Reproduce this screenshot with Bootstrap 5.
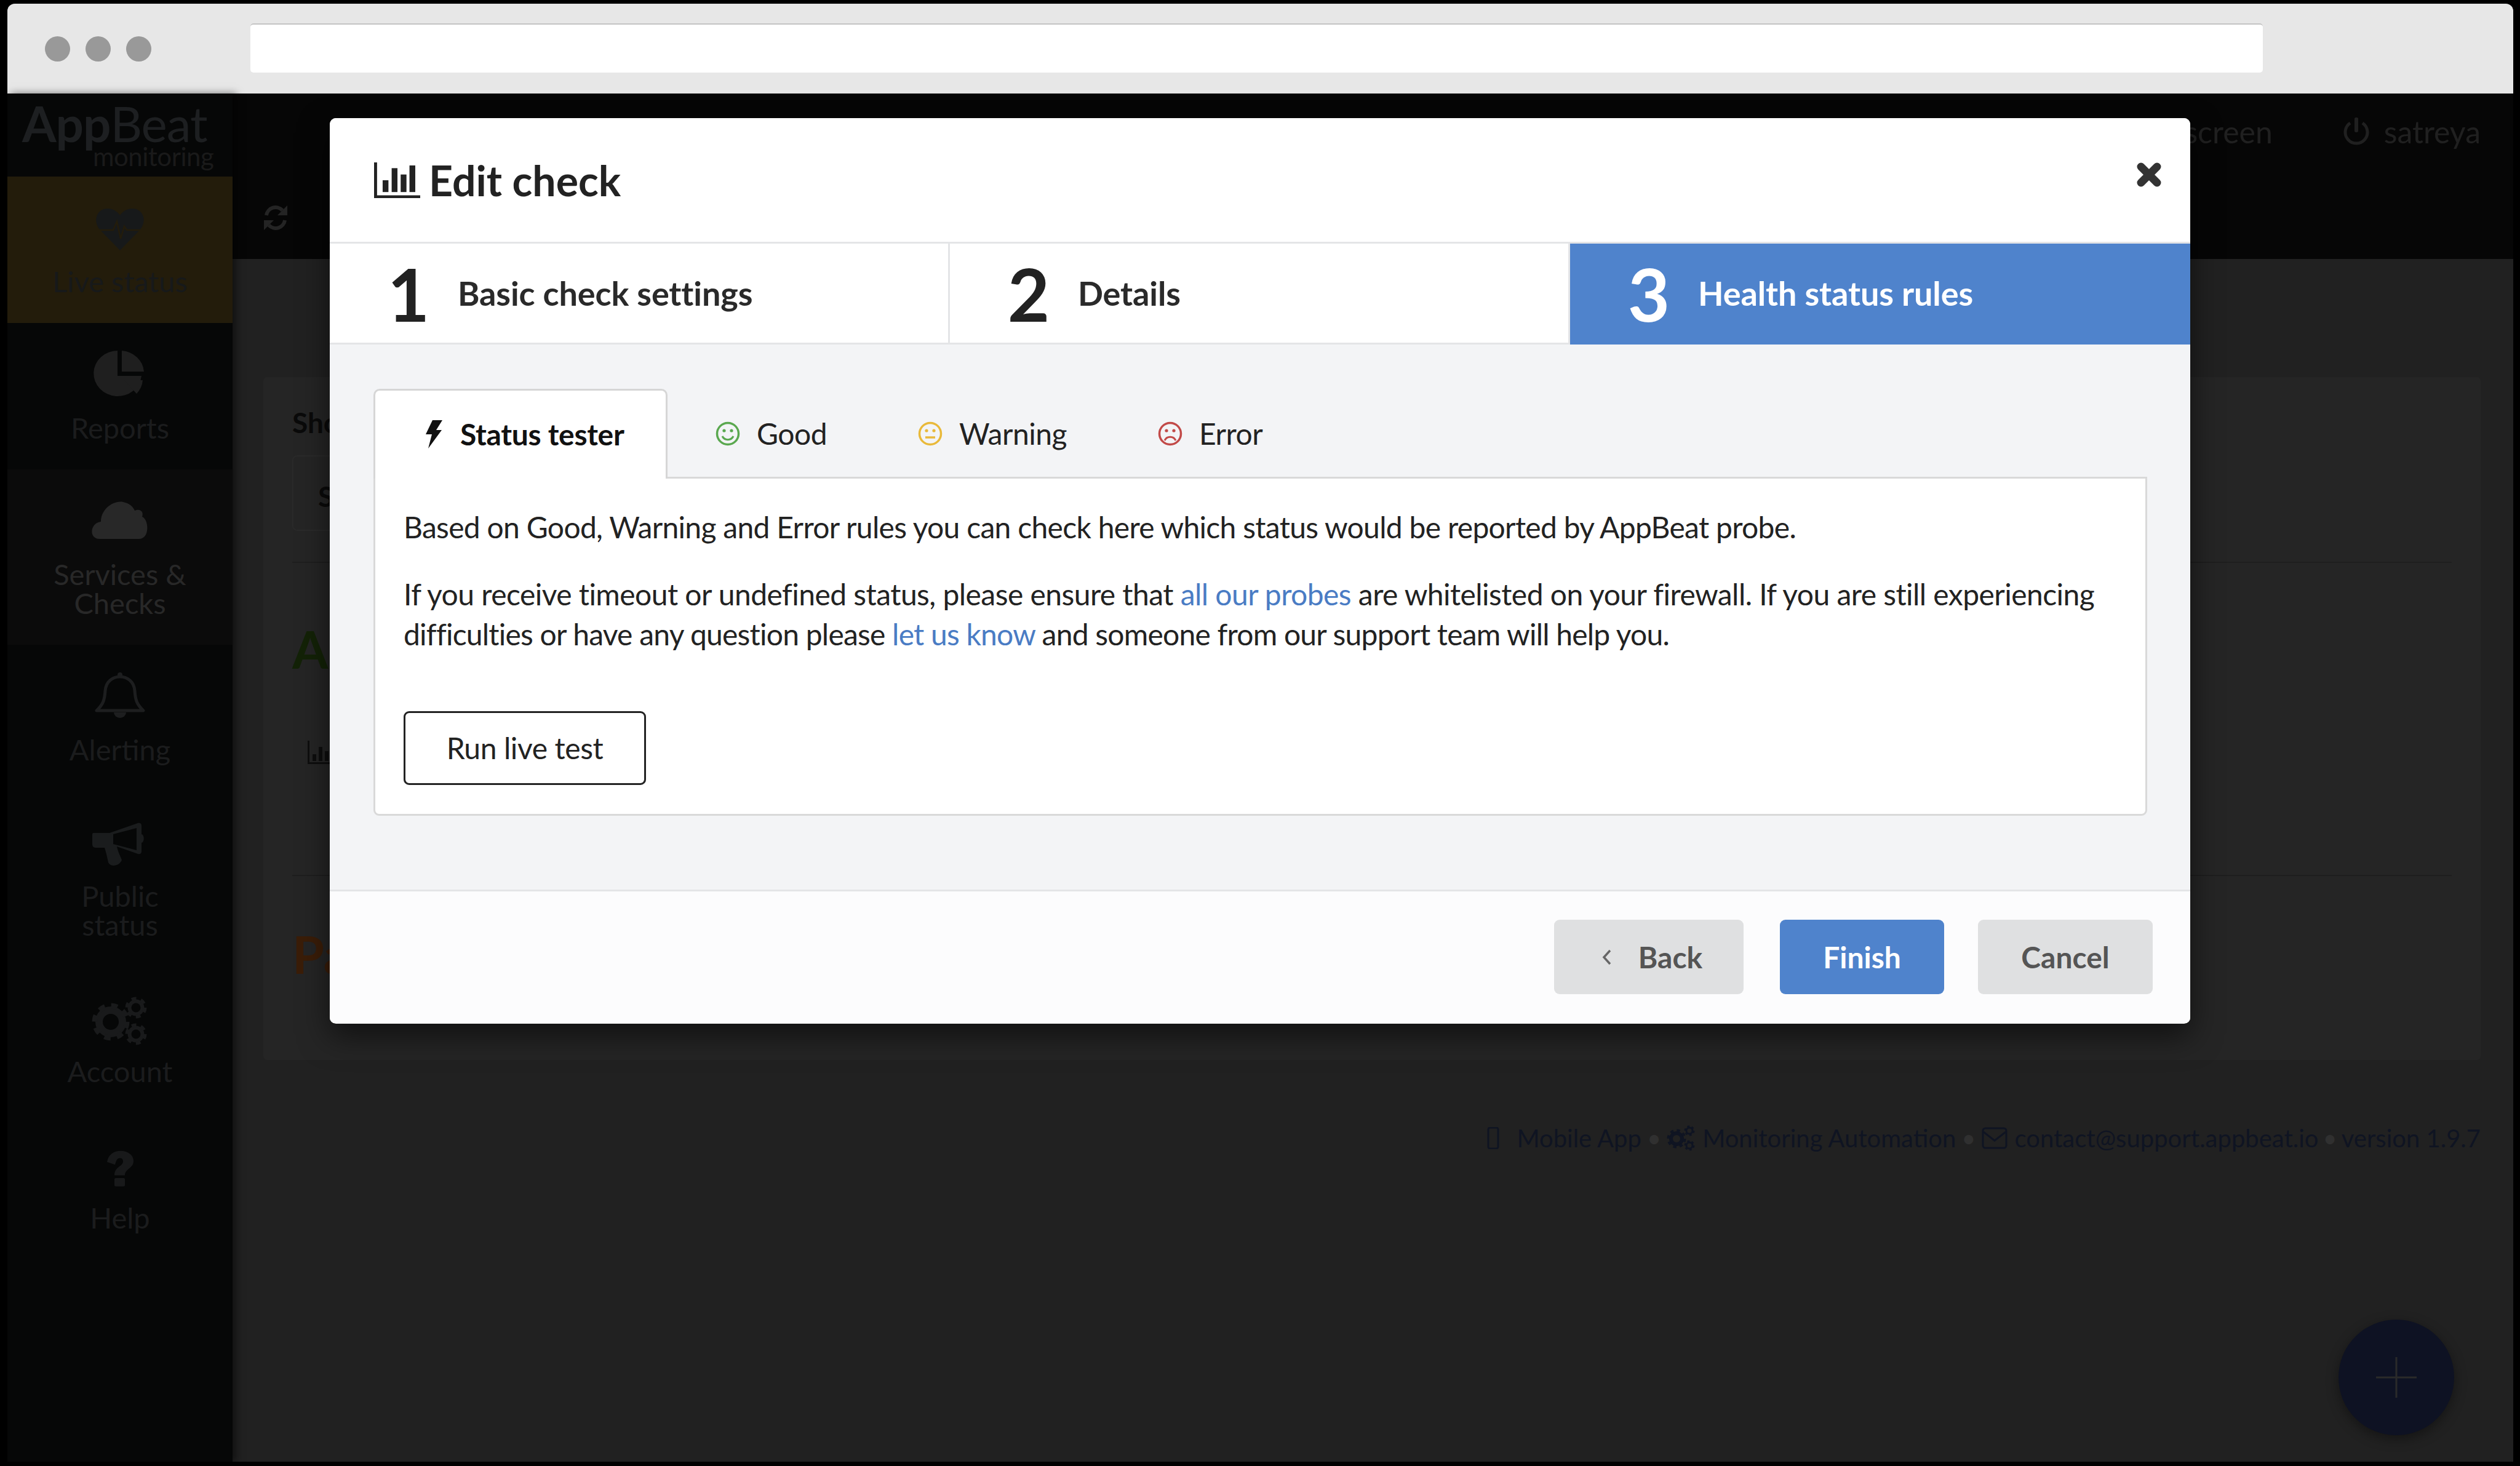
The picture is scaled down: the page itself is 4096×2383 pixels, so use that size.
<!DOCTYPE html>
<html lang="en">
<head>
<meta charset="utf-8">
<title>Edit check</title>
<link href="https://cdn.jsdelivr.net/npm/bootstrap@5.3.0/dist/css/bootstrap.min.css" rel="stylesheet">
<style>
html,body{height:100%;margin:0}
body{background:#000;font-family:Lato,"Liberation Sans",sans-serif;overflow:hidden;padding:6px 11px 7px 12px;color:#222}
.app-frame{height:100%;position:relative;overflow:hidden;border-radius:12px 12px 0 0;background:#212121}
.browser-bar{height:146px;flex:none;background:#e7e7e7;padding-left:61px;padding-right:407px}
.dot-light{width:41px;height:41px;border-radius:50%;background:#999;margin-right:25px}
.dot-light:last-of-type{margin-right:161px}
.addr{height:80px;flex:1;background:#fff;border-top:2px solid #c4c4c4;border-radius:5px;margin-top:-2px}
.shell{flex:1;min-height:0}
.side{width:366px;flex:none;background:#060707;box-shadow:6px 0 12px rgba(0,0,0,.5);position:relative;z-index:1}
.logo-box{height:135px;position:relative;padding:9px 0 0 24px;line-height:1}
.logo-main{font-size:80px;color:#1d1f21;letter-spacing:-1px;line-height:78px}
.logo-sub{font-size:42px;color:#1a1a1a;position:absolute;left:139px;top:81px;letter-spacing:-.5px}
.side-item{padding:44.5px 0;text-align:center;font-size:47px;line-height:47px;color:#1b1c1d}
.side-item svg{display:block;margin:0 auto 27px;height:75px;width:90px;overflow:visible}
.side-item.is-live{background:#231c0b;color:#17191a}
.side-item.is-soft{background:#0b0b0b;color:#282828}
.main-area{min-width:0}
.top-strip{height:135px;background:#060606;padding:0 53px 10px 0;font-size:50px;color:#202020}
.power-ico{margin-left:115px}
.sub-strip{height:134px;background:#060606;padding-left:49px}
.content-area{padding:192px 53px 0 50px}
.panel-box{height:1110px;background:#252525;border-radius:6px;padding:46px 47px 0 47px}
.panel-label{font-size:46px;font-weight:700;color:#0a0a0a;line-height:56px}
.panel-select{width:1100px;height:123px;margin-top:25px;border:2px solid #2a2a2a;border-radius:8px;padding:30px 0 0 40px;font-size:46px;font-weight:700;color:#0a0a0a}
.panel-rule{border-top:2px solid #1e1e1e;margin:50px 0 0}
.panel-rule-low{margin-top:180px}
.panel-head{font-size:84px;font-weight:700;line-height:84px;margin-top:98px}
.head-green{color:#132207}
.head-orange{color:#3a1d08;margin-top:85px}
.panel-bars{display:block;margin:107px 0 0 25px}
.foot-line{margin-top:102px;font-size:40px;color:#0f1422;line-height:50px;gap:12px}
.foot-dot{color:#303030;margin:0 -3px}
.foot-dot.is-tight{margin:0 -5px}
.fab{position:absolute;right:96px;bottom:43px;width:188px;height:188px;border-radius:50%;background:#0e1223;box-shadow:0 6px 20px rgba(0,0,0,.4)}
.edit-modal{position:absolute;left:524px;top:186px;width:3024px;height:1472px;border:0;border-radius:10px;background:#fff;box-shadow:0 20px 50px rgba(0,0,0,.55);z-index:5;overflow:hidden}
.edit-head{height:204px;padding:0 67px 0 72px;border-bottom:3px solid #e4e5e7;position:relative;background:#fff}
.edit-title{font-size:68px;font-weight:700;line-height:1;margin:0 0 0 14px;color:#222}
.edit-close{position:absolute;left:2936px;top:71px;width:42px;height:42px;background:none;border:0;padding:0}
.step-cell{height:164px;background:#fff;border-bottom:3px solid #e4e5e7;border-right:3px solid #e4e5e7}
.step-num{width:84px;margin-left:86px;margin-right:38px;text-align:center;font-size:118px;font-weight:700;line-height:1;color:#222;padding-top:2px}
.step-name{font-size:54px;font-weight:700;color:#2a2a2a;letter-spacing:-.1px}
.step-cell.is-on{background:#4f83cc;border-color:#4f83cc;color:#fff}
.step-cell.is-on .step-num,.step-cell.is-on .step-name{color:#fff}
.edit-body{background:#f3f4f6;padding:72px 70px 120px 71px}
.tabs-row{border:0;margin:0;position:relative;z-index:1;margin-bottom:-3px}
.tabs-row .nav-link{height:146px;padding:0 74px;border:0;color:#222;font-size:48px;letter-spacing:-.5px;background:none;border-radius:0;white-space:nowrap}
.tabs-row .nav-link.active{padding:0 0 2px 82px;background:#fff;color:#111;font-weight:700;letter-spacing:-.3px;border:3px solid #d6d6d6;border-bottom:0;border-radius:10px 10px 0 0;width:478px}
.tabs-row .nav-item:nth-child(2){margin-left:4px}
.tabs-row svg{flex:none;margin-right:27px}
.tabs-row .active svg{margin-right:29px}
.tab-pane-box{background:#fff;border:3px solid #d9d9d9;border-radius:0 0 9px 9px;padding:46px 45px 47px 46px;font-size:48px;line-height:65px;color:#222;letter-spacing:-.7px}
.tab-pane-box p{margin:0 0 44px}
.tab-pane-box a{color:#4a7cc4;text-decoration:none}
.line-wide{letter-spacing:-.55px}
.line-narrow{letter-spacing:-.78px}
.run-btn{display:block;width:394px;height:120px;margin-top:93px;border:3px solid #222;border-radius:9px;background:#fff;color:#222;font-size:48px;letter-spacing:-.4px;padding:0}
.edit-foot{height:217px;background:#fcfcfd;border-top:3px solid #e4e5e7;padding:46px 61px 0 0}
.foot-btn{height:121px;border:0;border-radius:9px;font-size:48px;font-weight:700;padding:0;background:#dfe0e1;color:#555}
.foot-btn:hover{background:#dfe0e1;color:#555}
.btn-back{width:308px;margin-right:59px;padding-left:10px}
.btn-back svg{margin-right:42px}
.btn-finish,.btn-finish:hover{background:#4f83cc;color:#fff}
.btn-finish{width:267px;margin-right:55px}
.btn-cancel{width:284px}
</style>
</head>
<body>
<div class="app-frame d-flex flex-column">
  <div class="browser-bar d-flex align-items-center">
    <span class="dot-light"></span><span class="dot-light"></span><span class="dot-light"></span>
    <div class="addr"></div>
  </div>
  <div class="shell d-flex">
    <aside class="side">
      <div class="logo-box"><div class="logo-main"><b>App</b>Beat</div><div class="logo-sub">monitoring</div></div>
      <div class="side-item is-live">
        <svg viewBox="0 0 90 75"><g transform="translate(0 6)"><path d="M45 69 L12 35 C0 20 8 1 25 1 C34 1 41 6 45 12 C49 6 56 1 65 1 C82 1 90 20 78 35 Z" fill="#17191a"/><path d="M8 36 H34 L40 22 L46 50 L52 30 L56 36 H82" fill="none" stroke="#231c0b" stroke-width="2.5"/></g></svg>
        Live status
      </div>
      <div class="side-item">
        <svg viewBox="0 0 90 75"><path d="M41 0 V41 H80 A39 37 0 1 1 41 0 Z" fill="#1f1f1f"/><path d="M48 0 A39 37 0 0 1 84 34 H48 Z" fill="#1f1f1f"/><path d="M52 48 L82 48 A39 37 0 0 1 72 70 Z" fill="#1f1f1f"/></svg>
        Reports
      </div>
      <div class="side-item is-soft">
        <svg viewBox="0 0 90 75"><path d="M12 68 C-6 68 -4 42 14 40 C14 20 34 5 50 8 C60 10 66 15 69 22 C78 18 84 24 81 32 C92 36 94 68 76 68 Z" fill="#282828"/></svg>
        Services &amp;<br>Checks
      </div>
      <div class="side-item">
        <svg viewBox="0 0 90 75"><path d="M7 62 C18 52 20 44 21 30 C22 15 33 7 45 7 C57 7 68 15 69 30 C70 44 72 52 83 62 Z" fill="none" stroke="#1d1e1f" stroke-width="5" stroke-linejoin="round"/><path d="M35 65 A10 9 0 0 0 55 65" fill="#1d1e1f"/><circle cx="45" cy="4" r="4" fill="#1d1e1f"/></svg>
        Alerting
      </div>
      <div class="side-item">
        <svg viewBox="0 0 90 75"><path transform="translate(0 5)" d="M2 18 H28 L74 2 C78 1 80 3 80 6 V20 C85 21 85 33 80 34 V48 C80 52 77 53 74 52 L40 40 C42 50 46 56 48 62 C44 72 30 74 26 66 C24 56 22 48 20 42 H6 C0 42 0 38 0 34 V22 C0 20 0 18 2 18 Z M34 20 V36 L72 46 V10 Z" fill="#1a1c1d" fill-rule="evenodd"/></svg>
        Public<br>status
      </div>
      <div class="side-item">
        <svg viewBox="0 0 90 75"><g transform="translate(0 5)" fill="none" stroke="#191a1b"><circle cx="30" cy="40" r="19" stroke-width="12"/><circle cx="30" cy="40" r="26" stroke-width="9" stroke-dasharray="10.2 10.2"/><circle cx="71" cy="17" r="10.5" stroke-width="6"/><circle cx="71" cy="17" r="14.5" stroke-width="6" stroke-dasharray="7.6 7.6"/><circle cx="71" cy="60" r="10.5" stroke-width="6"/><circle cx="71" cy="60" r="14.5" stroke-width="6" stroke-dasharray="7.6 7.6"/></g></svg>
        Account
      </div>
      <div class="side-item">
        <svg viewBox="0 0 90 75"><g transform="translate(0 15) scale(1 .9)"><path d="M24 22 C26 8 36 2 46 2 C58 2 67 10 67 20 C67 34 53 34 53 46 H36 C36 30 50 30 50 21 C50 17 48 15 45 15 C41 15 39 18 37 27 Z" fill="#18191a"/><rect x="36" y="51" width="17" height="15" rx="2" fill="#18191a"/></g></svg>
        Help
      </div>
    </aside>
    <div class="main-area flex-grow-1 d-flex flex-column">
      <div class="top-strip d-flex justify-content-end align-items-center">
        <span>Full screen</span>
        <svg class="power-ico" width="42" height="48" viewBox="0 0 42 48"><path d="M11 9 A18 18 0 1 0 31 9" fill="none" stroke="#202020" stroke-width="5"/><rect x="18" y="0" width="6" height="24" rx="2" fill="#202020"/></svg>
        <span class="ms-4">satreya</span>
      </div>
      <div class="sub-strip d-flex align-items-center">
        <svg width="42" height="46" viewBox="0 0 42 46"><g fill="none" stroke="#242424" stroke-width="6"><path d="M6 19 A15 15 0 0 1 32 11"/><path d="M36 27 A15 15 0 0 1 10 35"/></g><path d="M40 3 V19 H24 Z M2 43 V27 H18 Z" fill="#242424"/></svg>
      </div>
      <div class="content-area flex-grow-1">
        <div class="panel-box">
          <div class="panel-label">Show</div>
          <div class="panel-select">Select</div>
          <div class="panel-rule"></div>
          <div class="panel-head head-green">All</div>
          <svg class="panel-bars" width="48" height="38" viewBox="0 0 48 38"><path d="M0 0h3v35h45v3H0Z M8 22h6v11H8Z M18 10h6v23h-6Z M28 17h6v16h-6Z M38 5h6v28h-6Z" fill="#0e0e0e"/></svg>
          <div class="panel-rule panel-rule-low"></div>
          <div class="panel-head head-orange">Paused</div>
        </div>
        <div class="foot-line d-flex justify-content-end align-items-center">
          <svg width="20" height="36" viewBox="0 0 20 36"><rect x="2" y="1" width="16" height="34" rx="3" fill="none" stroke="#0f1422" stroke-width="3"/></svg>
          <span class="ms-3">Mobile App</span><span class="foot-dot">•</span>
          <svg width="46" height="42" viewBox="0 0 46 42"><g fill="none" stroke="#0f1422"><circle cx="16" cy="22" r="9" stroke-width="6"/><circle cx="16" cy="22" r="13" stroke-width="5" stroke-dasharray="5.1 5.1"/><circle cx="37" cy="9" r="5" stroke-width="3"/><circle cx="37" cy="9" r="7" stroke-width="3" stroke-dasharray="3.7 3.6"/><circle cx="37" cy="33" r="5" stroke-width="3"/><circle cx="37" cy="33" r="7" stroke-width="3" stroke-dasharray="3.7 3.6"/></g></svg>
          <span>Monitoring Automation</span><span class="foot-dot">•</span>
          <svg width="42" height="36" viewBox="0 0 42 36"><rect x="2" y="2" width="38" height="32" rx="4" fill="none" stroke="#0f1422" stroke-width="3"/><path d="M3 8 L21 22 L39 8" fill="none" stroke="#0f1422" stroke-width="3"/></svg>
          <span>contact@support.appbeat.io</span><span class="foot-dot is-tight">•</span>
          <span>version 1.9.7</span>
        </div>
      </div>
    </div>
  </div>
  <div class="fab d-flex align-items-center justify-content-center">
    <svg width="66" height="66" viewBox="0 0 66 66"><path d="M33 0V66M0 33H66" stroke="#2a2a2a" stroke-width="3"/></svg>
  </div>

  <div class="modal-content edit-modal">
    <div class="edit-head d-flex align-items-center">
      <svg width="75" height="58" viewBox="163 347 215 236" preserveAspectRatio="none"><path d="M163 347h14v218h201v18H163Z" fill="#222"/><rect x="203" y="465" width="27" height="78" fill="#222"/><rect x="245" y="385" width="27" height="158" fill="#222"/><rect x="287" y="427" width="27" height="116" fill="#222"/><rect x="328" y="367" width="27" height="176" fill="#222"/></svg>
      <h5 class="edit-title">Edit check</h5>
      <button class="edit-close" type="button" aria-label="Close"><svg width="42" height="42" viewBox="0 0 42 42"><path d="M8 8L34 34M34 8L8 34" stroke="#333" stroke-width="13" stroke-linecap="round"/></svg></button>
    </div>
    <div class="row g-0">
      <div class="col-4 step-cell d-flex align-items-center"><span class="step-num">1</span><span class="step-name">Basic check settings</span></div>
      <div class="col-4 step-cell d-flex align-items-center"><span class="step-num">2</span><span class="step-name">Details</span></div>
      <div class="col-4 step-cell is-on d-flex align-items-center"><span class="step-num">3</span><span class="step-name">Health status rules</span></div>
    </div>
    <div class="edit-body">
      <ul class="nav tabs-row">
        <li class="nav-item"><a class="nav-link active d-flex align-items-center" href="#"><svg width="27" height="46" viewBox="0 0 27 46"><path d="M11 0H27L17 16H26L4 46L10 23H0Z" fill="#111"/></svg>Status tester</a></li>
        <li class="nav-item"><a class="nav-link d-flex align-items-center" href="#"><svg width="40" height="40" viewBox="0 0 40 40"><circle cx="20" cy="20" r="17.5" fill="none" stroke="#5aa84f" stroke-width="3.5"/><circle cx="14" cy="15" r="2.6" fill="#5aa84f"/><circle cx="26" cy="15" r="2.6" fill="#5aa84f"/><path d="M11 24 A10 10 0 0 0 29 24" fill="none" stroke="#5aa84f" stroke-width="3"/></svg>Good</a></li>
        <li class="nav-item"><a class="nav-link d-flex align-items-center" href="#"><svg width="40" height="40" viewBox="0 0 40 40"><circle cx="20" cy="20" r="17.5" fill="none" stroke="#e9b93a" stroke-width="3.5"/><circle cx="14" cy="15" r="2.6" fill="#e9b93a"/><circle cx="26" cy="15" r="2.6" fill="#e9b93a"/><path d="M12 26H28" stroke="#e9b93a" stroke-width="3.5"/></svg>Warning</a></li>
        <li class="nav-item"><a class="nav-link d-flex align-items-center" href="#"><svg width="40" height="40" viewBox="0 0 40 40"><circle cx="20" cy="20" r="17.5" fill="none" stroke="#c24a48" stroke-width="3.5"/><circle cx="14" cy="15" r="2.6" fill="#c24a48"/><circle cx="26" cy="15" r="2.6" fill="#c24a48"/><path d="M11 31 A10 10 0 0 1 29 31" fill="none" stroke="#c24a48" stroke-width="3"/></svg>Error</a></li>
      </ul>
      <div class="tab-pane-box">
        <p>Based on Good, Warning and Error rules you can check here which status would be reported by AppBeat probe.</p>
        <p><span class="line-wide">If you receive timeout or undefined status, please ensure that <a href="#">all our probes</a> are whitelisted on your firewall. If you are still experiencing</span> <span class="line-narrow">difficulties or have any question please <a href="#">let us know</a> and someone from our support team will help you.</span></p>
        <button type="button" class="btn run-btn">Run live test</button>
      </div>
    </div>
    <div class="edit-foot d-flex justify-content-end">
      <button type="button" class="btn foot-btn btn-back d-flex align-items-center justify-content-center"><svg width="18" height="30" viewBox="0 0 18 30"><path d="M14 4L4 15L14 26" fill="none" stroke="#666" stroke-width="3.5"/></svg>Back</button>
      <button type="button" class="btn foot-btn btn-finish">Finish</button>
      <button type="button" class="btn foot-btn btn-cancel">Cancel</button>
    </div>
  </div>
</div>
</body>
</html>
